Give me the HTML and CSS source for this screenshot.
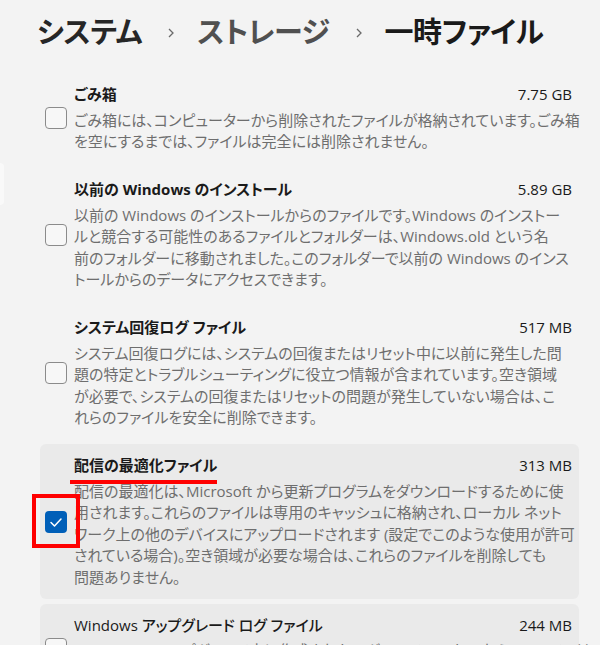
FILE: index.html
```html
<!DOCTYPE html>
<html lang="ja">
<head>
    <meta charset="UTF-8">
    <meta name="viewport" content="width=device-width, initial-scale=1.0">
    <title>一時ファイル</title>
    <link rel="stylesheet" href="styles.css">
</head>
<body>
    <!-- 左側のナビゲーションの端 -->
    <div class="nav-edge"></div>

    <!-- パンくずリスト -->
    <h1 class="breadcrumb">
        <span class="crumb crumb-root">システム</span>
        <svg class="chevron" width="8" height="10" viewBox="0 0 8 10"><polyline points="2,1 6,5 2,9" fill="none" stroke="#6a6a6a" stroke-width="1.3"/></svg>
        <span class="crumb crumb-parent">ストレージ</span>
        <svg class="chevron" width="8" height="10" viewBox="0 0 8 10"><polyline points="2,1 6,5 2,9" fill="none" stroke="#6a6a6a" stroke-width="1.3"/></svg>
        <span class="crumb crumb-current">一時ファイル</span>
    </h1>

    <!-- 一時ファイルの一覧 -->
    <div class="items">
        <div class="item">
            <div class="check-wrap"><span class="checkbox"></span></div>
            <div class="item-body">
                <div class="item-head">
                    <span class="item-title">ごみ箱</span>
                    <span class="item-size">7.75 GB</span>
                </div>
                <div class="item-desc">
                    <span class="line">ごみ箱には、コンピューターから削除されたファイルが格納されています。ごみ箱</span>
                    <span class="line">を空にするまでは、ファイルは完全には削除されません。</span>
                </div>
            </div>
        </div>

        <div class="item">
            <div class="check-wrap"><span class="checkbox"></span></div>
            <div class="item-body">
                <div class="item-head">
                    <span class="item-title">以前の Windows のインストール</span>
                    <span class="item-size">5.89 GB</span>
                </div>
                <div class="item-desc">
                    <span class="line">以前の Windows のインストールからのファイルです。Windows のインストー</span>
                    <span class="line">ルと競合する可能性のあるファイルとフォルダーは、Windows.old という名</span>
                    <span class="line">前のフォルダーに移動されました。このフォルダーで以前の Windows のインス</span>
                    <span class="line">トールからのデータにアクセスできます。</span>
                </div>
            </div>
        </div>

        <div class="item">
            <div class="check-wrap"><span class="checkbox"></span></div>
            <div class="item-body">
                <div class="item-head">
                    <span class="item-title">システム回復ログ ファイル</span>
                    <span class="item-size">517 MB</span>
                </div>
                <div class="item-desc">
                    <span class="line">システム回復ログには、システムの回復またはリセット中に以前に発生した問</span>
                    <span class="line">題の特定とトラブルシューティングに役立つ情報が含まれています。空き領域</span>
                    <span class="line">が必要で、システムの回復またはリセットの問題が発生していない場合は、こ</span>
                    <span class="line">れらのファイルを安全に削除できます。</span>
                </div>
            </div>
        </div>

        <div class="item item-card">
            <div class="check-wrap marked"><span class="checkbox checked">
                <svg width="22" height="22" viewBox="0 0 22 22"><polyline points="6,11.5 9.5,15 16,8" fill="none" stroke="#fff" stroke-width="1.5" stroke-linecap="round" stroke-linejoin="round"/></svg>
            </span></div>
            <div class="item-body">
                <div class="item-head">
                    <span class="item-title underlined">配信の最適化ファイル</span>
                    <span class="item-size">313 MB</span>
                </div>
                <div class="item-desc">
                    <span class="line">配信の最適化は、Microsoft から更新プログラムをダウンロードするために使</span>
                    <span class="line">用されます。これらのファイルは専用のキャッシュに格納され、ローカル ネット</span>
                    <span class="line">ワーク上の他のデバイスにアップロードされます (設定でこのような使用が許可</span>
                    <span class="line">されている場合)。空き領域が必要な場合は、これらのファイルを削除しても</span>
                    <span class="line">問題ありません。</span>
                </div>
            </div>
        </div>

        <div class="item item-card">
            <div class="check-wrap"><span class="checkbox"></span></div>
            <div class="item-body">
                <div class="item-head">
                    <span class="item-title light">Windows アップグレード ログ ファイル</span>
                    <span class="item-size">244 MB</span>
                </div>
                <div class="item-desc">
                    <span class="line">Windows のアップグレード中に作成されたログ ファイルです。これらのファイルは</span>
                    <span class="line">アップグレード中に発生した問題の特定とトラブルシューティングに役立ちます。</span>
                </div>
            </div>
        </div>
    </div>
</body>
</html>
```

FILE: styles.css
```css
/* 全体 */
body {
    margin: 0;
    height: 645px;
    overflow: hidden;
    background-color: #f3f3f3;
    font-family: "Open Sans", "Noto Sans CJK JP", sans-serif;
    font-feature-settings: "palt";
    color: #1a1a1a;
    position: relative;
}

/* 左ペインの見切れた部分 */
.nav-edge {
    position: absolute;
    left: 0;
    top: 163px;
    width: 4px;
    height: 42px;
    background-color: #f9f9f9;
    border-radius: 0 4px 4px 0;
}

/* パンくずリスト */
.breadcrumb {
    margin: 0;
    padding: 12px 36px 21px 37px;
    display: flex;
    align-items: center;
    font-size: 29px;
    line-height: 40px;
    font-weight: 600;
    letter-spacing: -0.4px;
}

.crumb-root {
    color: #262626;
}

.crumb-parent {
    color: #505050;
}

.crumb-current {
    color: #1a1a1a;
}

.chevron {
    margin: 2px 22px 0 25px;
}

/* 一覧 */
.items {
    padding: 0 21px 0 40px;
}

.item {
    display: flex;
    align-items: center;
    gap: 7px;
    padding: 11px 7px 11px 5px;
    margin-bottom: 4.5px;
    border-radius: 6px;
}

.item-card {
    background-color: #eaeaea;
}

.check-wrap {
    position: relative;
    width: 22px;
    height: 22px;
    flex-shrink: 0;
}

.checkbox {
    display: block;
    box-sizing: border-box;
    width: 22px;
    height: 22px;
    border: 1px solid #8b8b8b;
    border-radius: 4px;
    background-color: #f7f7f7;
}

.checkbox.checked {
    border: none;
    background-color: #005fb8;
}

.checkbox svg {
    display: block;
}

/* 赤枠（注釈） */
.marked::after {
    content: "";
    position: absolute;
    left: -13px;
    right: -13px;
    top: -17px;
    bottom: -15px;
    border: 4px solid #f00;
}

.item-body {
    flex: 1;
    min-width: 0;
    font-size: 15px;
    line-height: 21.5px;
}

.item-head {
    display: flex;
    justify-content: space-between;
    margin-bottom: 4px;
}

.item-title {
    font-weight: 700;
}

.item-title.light {
    font-weight: 500;
}

.underlined {
    position: relative;
}

.underlined::after {
    content: "";
    position: absolute;
    left: -4px;
    right: 0;
    top: 25px;
    height: 4px;
    background-color: #f00;
}

.item-desc {
    color: #6e6e6e;
}

.line {
    display: block;
    white-space: nowrap;
}
```
